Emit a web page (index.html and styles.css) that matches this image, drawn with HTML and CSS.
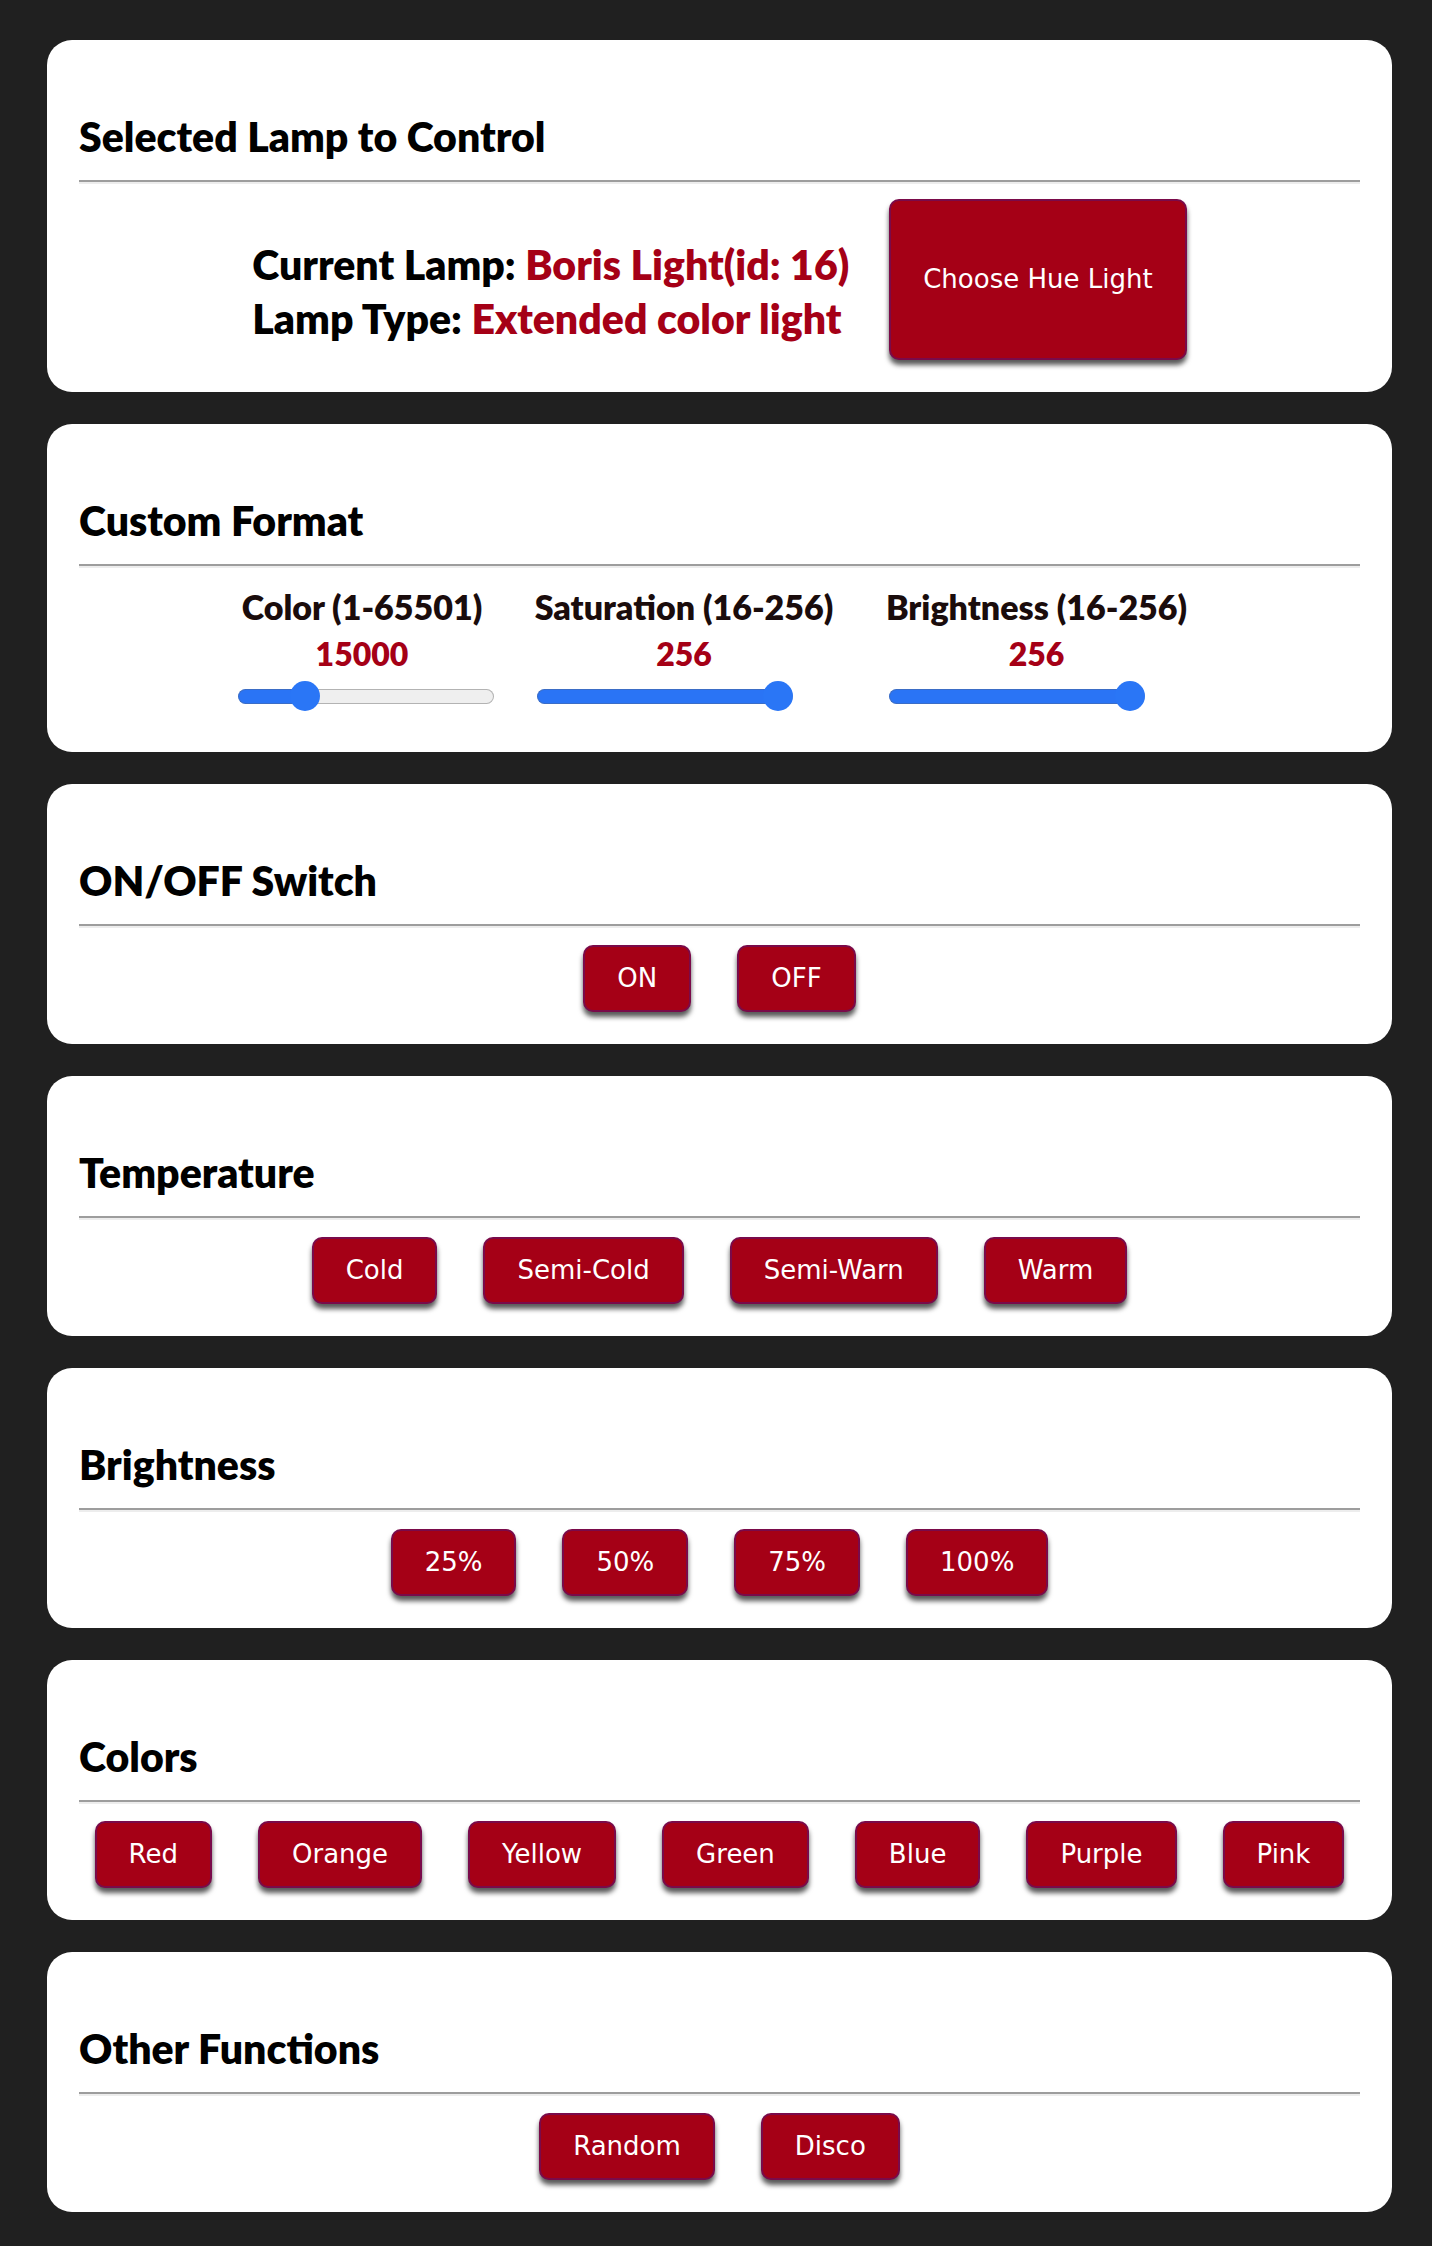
FILE: index.html
```html
<!DOCTYPE html>
<html lang="en">
<head>
<meta charset="utf-8">
<title>Hue Lamp Control</title>
<link rel="stylesheet" href="styles.css">
</head>
<body>
<main class="page">
  <section class="card card-lamp">
    <h2 class="card-title">Selected Lamp to Control</h2>
    <div class="divider"></div>
    <div class="lamp-row">
      <div class="lamp-info">
        <div>Current Lamp: <span class="accent">Boris Light(id: 16)</span></div>
        <div>Lamp Type: <span class="accent">Extended color light</span></div>
      </div>
      <button class="btn btn-large" type="button">Choose Hue Light</button>
    </div>
  </section>

  <section class="card card-sliders">
    <h2 class="card-title">Custom Format</h2>
    <div class="divider"></div>
    <div class="slider-row">
      <div class="slider-col">
        <div class="slider-label">Color (1-65501)</div>
        <div class="slider-value">15000</div>
        <div class="slider slider-first">
          <div class="track"><div class="fill" style="width:67px"></div><div class="rest"></div></div>
          <div class="thumb" style="left:52px"></div>
        </div>
      </div>
      <div class="slider-col">
        <div class="slider-label">Saturation (16-256)</div>
        <div class="slider-value">256</div>
        <div class="slider">
          <div class="track"><div class="fill" style="width:241px"></div><div class="rest"></div></div>
          <div class="thumb" style="left:226px"></div>
        </div>
      </div>
      <div class="slider-col">
        <div class="slider-label">Brightness (16-256)</div>
        <div class="slider-value">256</div>
        <div class="slider">
          <div class="track"><div class="fill" style="width:241px"></div><div class="rest"></div></div>
          <div class="thumb" style="left:226px"></div>
        </div>
      </div>
    </div>
  </section>

  <section class="card">
    <h2 class="card-title">ON/OFF Switch</h2>
    <div class="divider"></div>
    <div class="btn-row">
      <button class="btn" type="button">ON</button>
      <button class="btn" type="button">OFF</button>
    </div>
  </section>

  <section class="card">
    <h2 class="card-title">Temperature</h2>
    <div class="divider"></div>
    <div class="btn-row">
      <button class="btn" type="button">Cold</button>
      <button class="btn" type="button">Semi-Cold</button>
      <button class="btn" type="button">Semi-Warn</button>
      <button class="btn" type="button">Warm</button>
    </div>
  </section>

  <section class="card">
    <h2 class="card-title">Brightness</h2>
    <div class="divider"></div>
    <div class="btn-row">
      <button class="btn" type="button">25%</button>
      <button class="btn" type="button">50%</button>
      <button class="btn" type="button">75%</button>
      <button class="btn" type="button">100%</button>
    </div>
  </section>

  <section class="card">
    <h2 class="card-title">Colors</h2>
    <div class="divider"></div>
    <div class="btn-row">
      <button class="btn" type="button">Red</button>
      <button class="btn" type="button">Orange</button>
      <button class="btn" type="button">Yellow</button>
      <button class="btn" type="button">Green</button>
      <button class="btn" type="button">Blue</button>
      <button class="btn" type="button">Purple</button>
      <button class="btn" type="button">Pink</button>
    </div>
  </section>

  <section class="card">
    <h2 class="card-title">Other Functions</h2>
    <div class="divider"></div>
    <div class="btn-row">
      <button class="btn" type="button">Random</button>
      <button class="btn" type="button">Disco</button>
    </div>
  </section>
</main>
</body>
</html>
```

FILE: styles.css
```css
* {
  box-sizing: border-box;
}

html, body {
  margin: 0;
  padding: 0;
}

body {
  background: #202020;
  font-family: Lato, "Noto Sans", sans-serif;
}

.page {
  display: flex;
  flex-direction: column;
  gap: 32px;
  padding: 40px 40px 34px 47px;
}

.card {
  background: #ffffff;
  border-radius: 25px;
  padding: 73px 32px 32px;
}

.card-title {
  margin: 0;
  font-size: 41px;
  line-height: 48px;
  font-weight: 800;
  color: #000000;
}

.divider {
  margin-top: 19px;
  border-top: 2px solid #9d9d9d;
  border-bottom: 2px solid #ededed;
}

.accent {
  color: #a50016;
}

/* Lamp row */
.card-lamp {
  padding-bottom: 32px;
}

.lamp-row {
  display: flex;
  justify-content: center;
  align-items: flex-start;
  gap: 40px;
  margin-top: 15px;
}

.lamp-info {
  margin-top: 39px;
  margin-bottom: -2px;
  font-size: 41px;
  line-height: 54px;
  font-weight: 800;
  color: #000000;
}

/* Buttons */
.btn-row {
  display: flex;
  justify-content: center;
  gap: 46px;
  margin-top: 17px;
}

.btn {
  font-family: "DejaVu Sans", Verdana, sans-serif;
  font-size: 26px;
  line-height: 31px;
  color: #ffffff;
  background: #a50016;
  border: 2px solid #7a0a4a;
  border-radius: 10px;
  padding: 16px 32px;
  box-shadow: 0 5px 5px rgba(0, 0, 0, 0.65);
  cursor: pointer;
}

.btn-large {
  padding: 63px 32px;
}

/* Sliders */
.card-sliders {
  padding-bottom: 41px;
}

.slider-row {
  display: grid;
  grid-template-columns: 241px 301px 302px;
  column-gap: 51px;
  justify-content: center;
  padding-right: 10px;
  margin-top: 19px;
}

.slider-col {
  display: flex;
  flex-direction: column;
  align-items: flex-start;
  text-align: center;
}

.slider-label {
  align-self: stretch;
  font-size: 34px;
  line-height: 40px;
  font-weight: 800;
  color: #1a0c0c;
  white-space: nowrap;
}

.slider-value {
  align-self: stretch;
  margin-top: 7px;
  font-size: 32px;
  line-height: 40px;
  font-weight: 800;
  color: #a50016;
}

.slider {
  position: relative;
  flex: none;
  width: 256px;
  height: 30px;
  margin-top: 7px;
  margin-left: 3px;
  display: flex;
  align-items: center;
}

.slider-first {
  margin-left: -4px;
}

.track {
  display: flex;
  width: 100%;
  height: 15px;
}

.fill {
  height: 100%;
  background: #2a74f5;
  border: 1.5px solid #3b6dc6;
  border-right: none;
  border-radius: 8px 0 0 8px;
}

.rest {
  flex: 1;
  height: 100%;
  background: #efefef;
  border: 1.5px solid #b3b3b3;
  border-left: none;
  border-radius: 0 8px 8px 0;
}

.thumb {
  position: absolute;
  top: 0;
  width: 30px;
  height: 30px;
  border-radius: 50%;
  background: #2a76f6;
}
```
